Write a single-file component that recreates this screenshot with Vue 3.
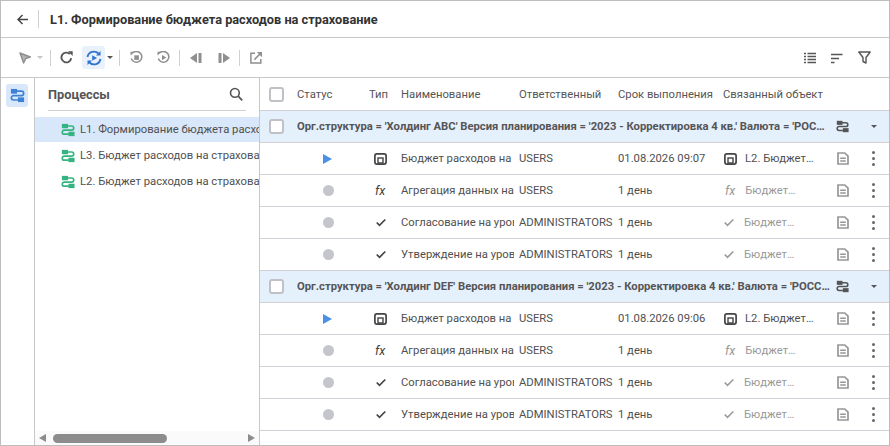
<script setup>
import { ref } from "vue"

const tree = ref([
  { id: 1, name: "L1. Формирование бюджета расходов на страхование", active: true },
  { id: 2, name: "L3. Бюджет расходов на страхование", active: false },
  { id: 3, name: "L2. Бюджет расходов на страхование", active: false },
])

const columns = [
  { title: "Статус", cls: "c-status" },
  { title: "Тип", cls: "c-type" },
  { title: "Наименование", cls: "c-name" },
  { title: "Ответственный", cls: "c-owner" },
  { title: "Срок выполнения", cls: "c-term" },
  { title: "Связанный объект", cls: "c-link" },
]

const groups = ref([
  { id: 1, title: "Орг.структура = 'Холдинг АВС' Версия планирования = '2023 - Корректировка 4 кв.' Валюта = 'РОССИЙСКИЙ РУБЛЬ'", date: "01.08.2026 09:07" },
  { id: 2, title: "Орг.структура = 'Холдинг DEF' Версия планирования = '2023 - Корректировка 4 кв.' Валюта = 'РОССИЙСКИЙ РУБЛЬ'", date: "01.08.2026 09:06" },
])

function rowsFor(group) {
  return [
    { status: "run", type: "form", name: "Бюджет расходов на страхование", owner: "USERS", term: group.date, link: "L2. Бюджет расходов", live: true },
    { status: "wait", type: "fx", name: "Агрегация данных на уровне", owner: "USERS", term: "1 день", link: "Бюджет расходов", live: false },
    { status: "wait", type: "check", name: "Согласование на уровне холдинга", owner: "ADMINISTRATORS", term: "1 день", link: "Бюджет расходов", live: false },
    { status: "wait", type: "check", name: "Утверждение на уровне холдинга", owner: "ADMINISTRATORS", term: "1 день", link: "Бюджет расходов", live: false },
  ]
}
</script>

<template>
  <div class="app">
    <header class="title-bar">
      <button class="back">
        <svg width="11" height="11" viewBox="0 0 11 11"><path d="M11 5.500H1.500M5.500 1 1 5.500 5.500 10" fill="none" stroke="#444" stroke-width="1.500"/></svg>
      </button>
      <span class="divider tall"></span>
      <h1>L1. Формирование бюджета расходов на страхование</h1>
    </header>

    <div class="toolbar">
      <svg class="t-arrow" width="12" height="12" viewBox="0 0 12 12"><path d="M1 1 11.300 5 6.700 6.600 4.600 11z" fill="#b4b4b4" stroke="#8f8f8f" stroke-width="1.400" stroke-linejoin="round"/></svg>
      <span class="caret light t-caret1"></span>
      <span class="divider t-div1"></span>
      <svg class="t-reload" width="13" height="13" viewBox="0 0 13 13"><path d="M11.200 7.200A4.900 4.900 0 1 1 9.800 3" fill="none" stroke="#555" stroke-width="1.900"/><path d="M8 .3h4.700V5z" fill="#555"/></svg>
      <span class="tool-on">
        <svg width="16" height="16" viewBox="0 0 16 16"><path d="M1.500 7A6.500 6.500 0 0 1 12.500 3.500" fill="none" stroke="#2f74d0" stroke-width="1.800"/><path d="M14.500 9A6.500 6.500 0 0 1 3.500 12.500" fill="none" stroke="#2f74d0" stroke-width="1.800"/><path d="M14.500 1v4.500H10zM1.500 15v-4.500H6z" fill="#2f74d0"/><path d="M6.200 5.200 11 8l-4.800 2.800z" fill="#2f74d0"/></svg>
      </span>
      <span class="caret t-caret2"></span>
      <span class="divider t-div2"></span>
      <svg class="t-stop" width="13" height="13" viewBox="0 0 13 13"><path d="M2.800 1.800A5.400 5.400 0 1 1 1.300 7.600" fill="none" stroke="#8f8f8f" stroke-width="1.500"/><path d="M.5.700h4.300L.5 4.600z" fill="#8f8f8f"/><rect x="4.300" y="4.300" width="4.600" height="4.600" fill="#8f8f8f"/></svg>
      <svg class="t-replay" width="13" height="13" viewBox="0 0 13 13"><path d="M2.800 1.800A5.400 5.400 0 1 1 1.300 7.600" fill="none" stroke="#8f8f8f" stroke-width="1.500"/><path d="M.5.700h4.300L.5 4.600z" fill="#8f8f8f"/><path d="M5 3.900 9.300 6.600 5 9.300z" fill="#8f8f8f"/></svg>
      <span class="divider t-div3"></span>
      <svg class="t-prev" width="12" height="12" viewBox="0 0 12 12"><path d="M7 1v10L0 6z" fill="#8f8f8f"/><rect x="8.500" y="1" width="3" height="10" fill="#8f8f8f"/></svg>
      <svg class="t-next" width="12" height="12" viewBox="0 0 12 12"><path d="M5 1v10l7-5z" fill="#8f8f8f"/><rect x=".5" y="1" width="3" height="10" fill="#8f8f8f"/></svg>
      <span class="divider t-div4"></span>
      <svg class="t-export" width="12" height="12" viewBox="0 0 12 12"><path d="M5 1.200H.9v9.900h9.900V7" fill="none" stroke="#8f8f8f" stroke-width="1.500"/><path d="M4.300 7.700 10 2" stroke="#8f8f8f" stroke-width="1.600"/><path d="M6.800 0H12v5.200z" fill="#8f8f8f"/></svg>
      <div class="tool-right">
        <svg width="12" height="12" viewBox="0 0 12 12"><path d="M0 1.500h2M0 4.500h2M0 7.500h2M0 10.500h2M3.500 1.500H12M3.500 4.500H12M3.500 7.500H12M3.500 10.500H12" stroke="#555" stroke-width="1.300" fill="none"/></svg>
        <svg width="12" height="12" viewBox="0 0 12 12"><path d="M0 2.500h11.500M0 6.500h8M0 10.500h3.500" stroke="#555" stroke-width="1.300" fill="none"/></svg>
        <svg width="13" height="13" viewBox="0 0 13 13"><path d="M.8 1h11.400L8 6.500v5.500L5 10.500v-4z" fill="none" stroke="#555" stroke-width="1.400" stroke-linejoin="round"/></svg>
      </div>
    </div>

    <div class="body">
      <nav class="rail">
        <span class="rail-btn">
          <svg width="15" height="15" viewBox="0 0 16 16"><rect x="1" y="1" width="6.500" height="5" fill="#3b82d6"/><rect x="8.500" y="10" width="6.500" height="5" fill="#3b82d6"/><path d="M7 3.400h5.200a2.300 2.300 0 0 1 0 4.700H3.800a2.300 2.300 0 0 0 0 4.700H9" fill="none" stroke="#3b82d6" stroke-width="1.800"/></svg>
        </span>
      </nav>

      <aside class="tree">
        <div class="tree-head">
          <span>Процессы</span>
          <svg width="14" height="14" viewBox="0 0 15 15"><circle cx="6.300" cy="6.300" r="4.700" fill="none" stroke="#555" stroke-width="1.700"/><path d="m9.800 9.800 4.400 4.400" stroke="#555" stroke-width="1.900"/></svg>
        </div>
        <div class="tree-list">
          <div v-for="item in tree" :key="item.id" class="tree-item" :class="{ active: item.active }">
            <svg width="14" height="14" viewBox="0 0 16 16"><rect x="1" y="1" width="7" height="5" fill="#35b481"/><rect x="8.500" y="10" width="7" height="5" fill="#35b481"/><path d="M7 3.400h5.200a2.300 2.300 0 0 1 0 4.700H3.800a2.300 2.300 0 0 0 0 4.700H9" fill="none" stroke="#35b481" stroke-width="1.900"/></svg>
            <span>{{ item.name }}</span>
          </div>
        </div>
        <div class="scrollbar">
          <span class="arrow left"></span>
          <div class="track"><span class="thumb"></span></div>
          <span class="arrow right"></span>
        </div>
      </aside>

      <section class="grid">
        <div class="row head">
          <span class="c-check"><span class="checkbox"></span></span>
          <span v-for="col in columns" :key="col.title" :class="col.cls">{{ col.title }}</span>
        </div>

        <template v-for="group in groups" :key="group.id">
          <div class="row group">
            <span class="c-check"><span class="checkbox"></span></span>
            <span class="group-title">{{ group.title }}</span>
            <span class="group-icon">
              <svg width="13" height="13" viewBox="0 0 16 16"><rect x="1" y="1" width="7" height="5" fill="#555"/><rect x="8.500" y="10" width="7" height="5" fill="#555"/><path d="M7 3.400h5.200a2.300 2.300 0 0 1 0 4.700H3.800a2.300 2.300 0 0 0 0 4.700H9" fill="none" stroke="#555" stroke-width="1.900"/></svg>
            </span>
            <span class="group-caret"><span class="caret"></span></span>
          </div>

          <div v-for="row in rowsFor(group)" :key="row.name" class="row item">
            <span class="c-check"></span>
            <span class="c-status status-cell">
              <span v-if="row.status === 'run'" class="play"></span>
              <span v-else class="dot"></span>
            </span>
            <span class="c-type type-cell">
              <svg v-if="row.type === 'form'" width="13" height="12" viewBox="0 0 13 12"><rect x=".9" y=".9" width="11.200" height="10.200" rx="2" fill="none" stroke="#444" stroke-width="1.700"/><rect x="4" y="5" width="5" height="5" fill="none" stroke="#444" stroke-width="1.400"/></svg>
              <i v-else-if="row.type === 'fx'" class="fx">fx</i>
              <svg v-else class="tick" width="10" height="9" viewBox="0 0 10 9"><path d="m.7 4.500 2.800 2.800L9.300 1.500" fill="none" stroke="#444" stroke-width="1.700"/></svg>
            </span>
            <span class="c-name cut">{{ row.name }}</span>
            <span class="c-owner cut">{{ row.owner }}</span>
            <span class="c-term">{{ row.term }}</span>
            <span class="c-link link-cell" :class="{ muted: !row.live }">
              <svg v-if="row.type === 'form'" width="13" height="12" viewBox="0 0 13 12"><rect x=".9" y=".9" width="11.200" height="10.200" rx="2" fill="none" stroke="#444" stroke-width="1.700"/><rect x="4" y="5" width="5" height="5" fill="none" stroke="#444" stroke-width="1.400"/></svg>
              <i v-else-if="row.type === 'fx'" class="fx">fx</i>
              <svg v-else width="10" height="9" viewBox="0 0 10 9"><path d="m.7 4.500 2.800 2.800L9.300 1.500" fill="none" stroke="#999" stroke-width="1.600"/></svg>
              <span class="link-text">{{ row.link }}</span>
            </span>
            <span class="doc">
              <svg width="12" height="13" viewBox="0 0 12 13"><path d="M1 1h6.800L11 4.200V12H1z" fill="none" stroke="#969696" stroke-width="1.700"/><path d="M3.200 6.200h5.600M3.200 9h5.600" stroke="#969696" stroke-width="1.500"/></svg>
            </span>
            <span class="more"><b></b><b></b><b></b></span>
          </div>
        </template>
      </section>
    </div>
  </div>
</template>

<style>
html, body {
  margin: 0;
  background: #fff;
}
</style>

<style scoped>
.app {
  width: 890px;
  height: 446px;
  box-sizing: border-box;
  border: 1px solid #bdbdbd;
  font-family: Roboto, "Liberation Sans", sans-serif;
  font-size: 11.250px;
  color: #505050;
  display: flex;
  flex-direction: column;
  overflow: hidden;
  background: #fff;
}

.title-bar {
  height: 37px;
  flex: none;
  box-sizing: border-box;
  border-bottom: 1px solid #c8c8c8;
  display: flex;
  align-items: center;
  padding-left: 16px;
}
.back {
  width: 11px;
  height: 11px;
  border: 0;
  padding: 0;
  background: none;
  display: flex;
}
.title-bar h1 {
  margin: 0;
  font-size: 12.750px;
  font-weight: 700;
  color: #333;
}
.divider {
  width: 1px;
  height: 16px;
  background: #d0d0d0;
  flex: none;
}
.divider.tall {
  height: 18px;
  margin: 0 11px 0 10px;
}

.toolbar {
  height: 40px;
  flex: none;
  box-sizing: border-box;
  border-bottom: 1px solid #c8c8c8;
  display: flex;
  align-items: center;
  padding: 0 18px;
}
.toolbar > svg {
  flex: none;
}
.t-caret1 { margin-left: 6px; }
.t-div1 { margin-left: 7px; }
.t-reload { margin-left: 9px; }
.t-caret2 { margin-left: 2px; }
.t-div2 { margin-left: 6px; }
.t-stop { margin-left: 10px; }
.t-replay { margin-left: 14px; }
.t-div3 { margin-left: 9px; }
.t-prev { margin-left: 10px; }
.t-next { margin-left: 16px; }
.t-div4 { margin-left: 9px; }
.t-export { margin-left: 10px; }
.tool-on {
  width: 23px;
  height: 23px;
  margin-left: 9px;
  border-radius: 3px;
  background: #e8f1fc;
  display: flex;
  align-items: center;
  justify-content: center;
  flex: none;
}
.caret {
  width: 0;
  height: 0;
  border-left: 3px solid transparent;
  border-right: 3px solid transparent;
  border-top: 3px solid #555;
  flex: none;
}
.caret.light {
  border-top-color: #c4c4c4;
}
.tool-right {
  margin-left: auto;
  display: flex;
  align-items: center;
  gap: 15px;
}

.body {
  flex: 1;
  min-height: 0;
  display: flex;
}
.rail {
  width: 34px;
  flex: none;
  box-sizing: border-box;
  border-right: 1px solid #c8c8c8;
  padding: 6px 5px;
}
.rail-btn {
  width: 22px;
  height: 23px;
  border-radius: 3px;
  background: #d8e7f9;
  display: flex;
  align-items: center;
  justify-content: center;
}

.tree {
  width: 225px;
  flex: none;
  box-sizing: border-box;
  border-right: 1px solid #c8c8c8;
  display: flex;
  flex-direction: column;
  overflow: hidden;
}
.tree-head {
  height: 33px;
  margin: 0 13px;
  box-sizing: border-box;
  border-bottom: 1px solid #d0d0d0;
  display: flex;
  align-items: center;
  justify-content: space-between;
  font-size: 12.750px;
  font-weight: 700;
  color: #555;
  padding-right: 3px;
}
.tree-list {
  flex: 1;
  margin-top: 6px;
}
.tree-item {
  height: 25px;
  margin-bottom: 1px;
  display: flex;
  align-items: center;
  gap: 5px;
  padding-left: 26px;
  white-space: nowrap;
  overflow: hidden;
}
.tree-item svg {
  flex: none;
}
.tree-item.active {
  background: #d8e7f9;
}
.scrollbar {
  height: 14px;
  flex: none;
  background: #fafafa;
  display: flex;
  align-items: center;
  padding: 0 4px;
  gap: 7px;
}
.track {
  flex: 1;
}
.thumb {
  display: block;
  width: 114px;
  height: 9px;
  border-radius: 5px;
  background: #8c8c8c;
}
.arrow {
  width: 0;
  height: 0;
  border-top: 4px solid transparent;
  border-bottom: 4px solid transparent;
}
.arrow.left {
  border-right: 7px solid #8c8c8c;
}
.arrow.right {
  border-left: 7px solid #8c8c8c;
}

.grid {
  flex: 1;
  min-width: 0;
  overflow: hidden;
}
.row {
  height: 32px;
  box-sizing: border-box;
  border-bottom: 1px solid #d0d0d6;
  display: flex;
  align-items: center;
  white-space: nowrap;
}
.row.head {
  height: 33px;
  color: #555;
}
.row.group {
  background: #e5f0fd;
  font-weight: 700;
  color: #555;
}
.c-check {
  width: 37px;
  flex: none;
  padding-left: 9px;
  box-sizing: border-box;
  display: flex;
}
.checkbox {
  width: 11px;
  height: 11px;
  border: 2px solid #c0c0c6;
  border-radius: 3px;
  background: #fff;
}
.c-status { width: 72px; flex: none; }
.c-type { width: 32px; flex: none; }
.c-name { width: 118px; flex: none; }
.c-owner { width: 99px; flex: none; }
.c-term { width: 105px; flex: none; }
.c-link { width: 112px; flex: none; }
.cut {
  overflow: hidden;
}
.c-name.cut {
  width: 113px;
  margin-right: 5px;
}
.group-title {
  width: 535px;
  flex: none;
  overflow: hidden;
  text-overflow: ellipsis;
}
.group-icon {
  margin-left: 4px;
  display: flex;
}
.group-caret {
  margin-left: 22px;
  display: flex;
}
.status-cell {
  padding-left: 26px;
  box-sizing: border-box;
  display: flex;
  align-items: center;
}
.play {
  width: 0;
  height: 0;
  border-left: 9px solid #4a90ea;
  border-top: 5px solid transparent;
  border-bottom: 5px solid transparent;
}
.dot {
  width: 11px;
  height: 11px;
  border-radius: 50%;
  background: #c4c6cc;
}
.type-cell {
  display: flex;
  align-items: center;
  padding-left: 5px;
  box-sizing: border-box;
}
.tick {
  margin-left: 2px;
}
.fx {
  font-family: Roboto, "Liberation Sans", sans-serif;
  font-size: 12.500px;
  font-style: italic;
  color: #444;
  margin-left: 1px;
}
.link-cell {
  display: flex;
  align-items: center;
  gap: 8px;
  padding-left: 1px;
  box-sizing: border-box;
}
.link-cell.muted {
  color: #999;
  gap: 10px;
}
.link-cell.muted .fx {
  color: #999;
}
.link-text {
  width: 70px;
  overflow: hidden;
  text-overflow: ellipsis;
}
.link-cell.muted .link-text {
  width: 53px;
}
.doc {
  display: flex;
  margin-left: 2px;
}
.more {
  margin-left: 23px;
  display: flex;
  flex-direction: column;
  gap: 3px;
}
.more b {
  width: 3px;
  height: 3px;
  border-radius: 50%;
  background: #666;
}
</style>
